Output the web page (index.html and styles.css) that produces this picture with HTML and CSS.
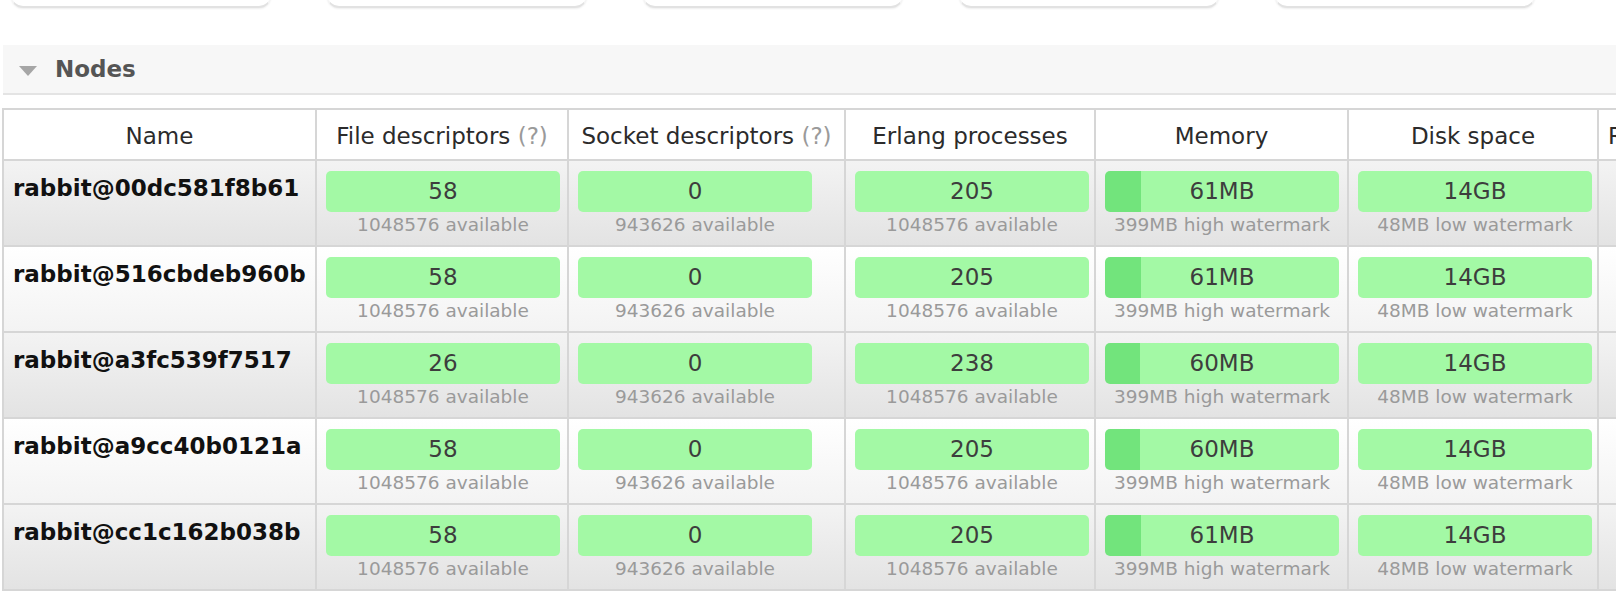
FILE: index.html
```html
<!DOCTYPE html>
<html>
<head>
<meta charset="utf-8">
<title>Nodes</title>
<link rel="stylesheet" href="styles.css">
</head>
<body>
<div class="boxes">
  <div class="box"></div>
  <div class="box"></div>
  <div class="box"></div>
  <div class="box"></div>
  <div class="box"></div>
</div>

<div class="section-head">
  <span class="tri"></span>
  <h2 class="title">Nodes</h2>
</div>

<table class="list">
  <thead>
    <tr>
      <th class="c-name">Name</th>
      <th class="c-fd">File descriptors <span class="help">(?)</span></th>
      <th class="c-sd">Socket descriptors <span class="help">(?)</span></th>
      <th class="c-ep">Erlang processes</th>
      <th class="c-mem">Memory</th>
      <th class="c-disk">Disk space</th>
      <th class="c-more">Rates</th>
    </tr>
  </thead>
  <tbody>
    <tr class="alt1">
      <th class="node">rabbit@00dc581f8b61</th>
      <td><div class="stat"><div class="bar">58</div><div class="sub">1048576 available</div></div></td>
      <td><div class="stat"><div class="bar">0</div><div class="sub">943626 available</div></div></td>
      <td><div class="stat"><div class="bar">205</div><div class="sub">1048576 available</div></div></td>
      <td><div class="stat"><div class="bar fill" style="--p:15.3%">61MB</div><div class="sub">399MB high watermark</div></div></td>
      <td><div class="stat"><div class="bar">14GB</div><div class="sub">48MB low watermark</div></div></td>
      <td></td>
    </tr>
    <tr class="alt2">
      <th class="node">rabbit@516cbdeb960b</th>
      <td><div class="stat"><div class="bar">58</div><div class="sub">1048576 available</div></div></td>
      <td><div class="stat"><div class="bar">0</div><div class="sub">943626 available</div></div></td>
      <td><div class="stat"><div class="bar">205</div><div class="sub">1048576 available</div></div></td>
      <td><div class="stat"><div class="bar fill" style="--p:15.3%">61MB</div><div class="sub">399MB high watermark</div></div></td>
      <td><div class="stat"><div class="bar">14GB</div><div class="sub">48MB low watermark</div></div></td>
      <td></td>
    </tr>
    <tr class="alt1">
      <th class="node">rabbit@a3fc539f7517</th>
      <td><div class="stat"><div class="bar">26</div><div class="sub">1048576 available</div></div></td>
      <td><div class="stat"><div class="bar">0</div><div class="sub">943626 available</div></div></td>
      <td><div class="stat"><div class="bar">238</div><div class="sub">1048576 available</div></div></td>
      <td><div class="stat"><div class="bar fill" style="--p:15.0%">60MB</div><div class="sub">399MB high watermark</div></div></td>
      <td><div class="stat"><div class="bar">14GB</div><div class="sub">48MB low watermark</div></div></td>
      <td></td>
    </tr>
    <tr class="alt2">
      <th class="node">rabbit@a9cc40b0121a</th>
      <td><div class="stat"><div class="bar">58</div><div class="sub">1048576 available</div></div></td>
      <td><div class="stat"><div class="bar">0</div><div class="sub">943626 available</div></div></td>
      <td><div class="stat"><div class="bar">205</div><div class="sub">1048576 available</div></div></td>
      <td><div class="stat"><div class="bar fill" style="--p:15.0%">60MB</div><div class="sub">399MB high watermark</div></div></td>
      <td><div class="stat"><div class="bar">14GB</div><div class="sub">48MB low watermark</div></div></td>
      <td></td>
    </tr>
    <tr class="alt1">
      <th class="node">rabbit@cc1c162b038b</th>
      <td><div class="stat"><div class="bar">58</div><div class="sub">1048576 available</div></div></td>
      <td><div class="stat"><div class="bar">0</div><div class="sub">943626 available</div></div></td>
      <td><div class="stat"><div class="bar">205</div><div class="sub">1048576 available</div></div></td>
      <td><div class="stat"><div class="bar fill" style="--p:15.3%">61MB</div><div class="sub">399MB high watermark</div></div></td>
      <td><div class="stat"><div class="bar">14GB</div><div class="sub">48MB low watermark</div></div></td>
      <td></td>
    </tr>
  </tbody>
</table>
</body>
</html>
```

FILE: styles.css
```css
html, body {
  margin: 0;
  padding: 0;
  overflow: hidden;
  background: #fff;
}
body {
  font-family: "DejaVu Sans", Verdana, sans-serif;
  font-size: 23px;
  color: #333;
  width: 1616px;
  height: 598px;
}

/* bottoms of the boxes above */
.boxes {
  display: flex;
  gap: 56px;
  padding-left: 11px;
  height: 10px;
}
.box {
  width: 260px;
  height: 40px;
  margin-top: -32px;
  border-radius: 12px;
  background: #fff;
  border: 1px solid #f6f6f6;
  border-bottom: 2px solid #e2e2e2;
  box-shadow: 0 1px 2px rgba(0, 0, 0, 0.07);
  box-sizing: border-box;
}

/* section header */
.section-head {
  margin: 35px 0 0 3px;
  height: 48px;
  background: #f7f7f7;
  border-bottom: 2px solid #e4e4e4;
  display: flex;
  align-items: center;
  padding-left: 16px;
}
.tri {
  width: 0;
  height: 0;
  border-left: 9px solid transparent;
  border-right: 9px solid transparent;
  border-top: 10px solid #a6a6a6;
  margin-top: 3px;
  margin-right: 18px;
}
.title {
  margin: 0;
  font-size: 23px;
  font-weight: bold;
  color: #555;
  line-height: 27px;
}

/* table */
table.list {
  margin: 13px 0 0 2px;
  border-collapse: separate;
  border-spacing: 0;
  table-layout: fixed;
  width: 1727px;
  border-left: 2px solid #d6d6d6;
  border-top: 2px solid #d6d6d6;
}
table.list th,
table.list td {
  box-sizing: border-box;
  border-right: 2px solid #d6d6d6;
  border-bottom: 2px solid #d6d6d6;
  vertical-align: top;
}
thead th {
  background: #fff;
  font-weight: normal;
  text-align: center;
  color: #2b2b2b;
  font-size: 23px;
  line-height: 27px;
  padding: 13px 4px 9px;
  white-space: nowrap;
  overflow: hidden;
}
thead th.c-more {
  text-align: left;
  padding-left: 9px;
}
.help {
  color: #9a9a9a;
}
.c-name { width: 313px; }
.c-fd { width: 252px; }
.c-sd { width: 277px; }
.c-ep { width: 250px; }
.c-mem { width: 253px; }
.c-disk { width: 250px; }
.c-more { width: 130px; }

tr.alt1 th, tr.alt1 td {
  background: linear-gradient(#f3f3f3, #e3e3e3);
}
tr.alt2 th, tr.alt2 td {
  background: linear-gradient(#ffffff, #f3f3f3);
}

th.node {
  text-align: left;
  font-weight: bold;
  color: #111;
  font-size: 23px;
  line-height: 27px;
  padding: 14px 6px 0 9px;
  white-space: nowrap;
}

tbody td {
  padding: 10px 9px 9px;
}
.stat {
  width: 234px;
  text-align: center;
}
.bar {
  height: 41px;
  line-height: 41px;
  border-radius: 5px;
  background: #a3f9a5;
  color: #3d3d3d;
  font-size: 23px;
}
.bar.fill {
  background: linear-gradient(to right, #72e47c var(--p), #a3f9a5 var(--p));
}
.sub {
  margin-top: 2px;
  font-size: 18.5px;
  line-height: 22px;
  color: #9a9a9a;
  white-space: nowrap;
}
```
